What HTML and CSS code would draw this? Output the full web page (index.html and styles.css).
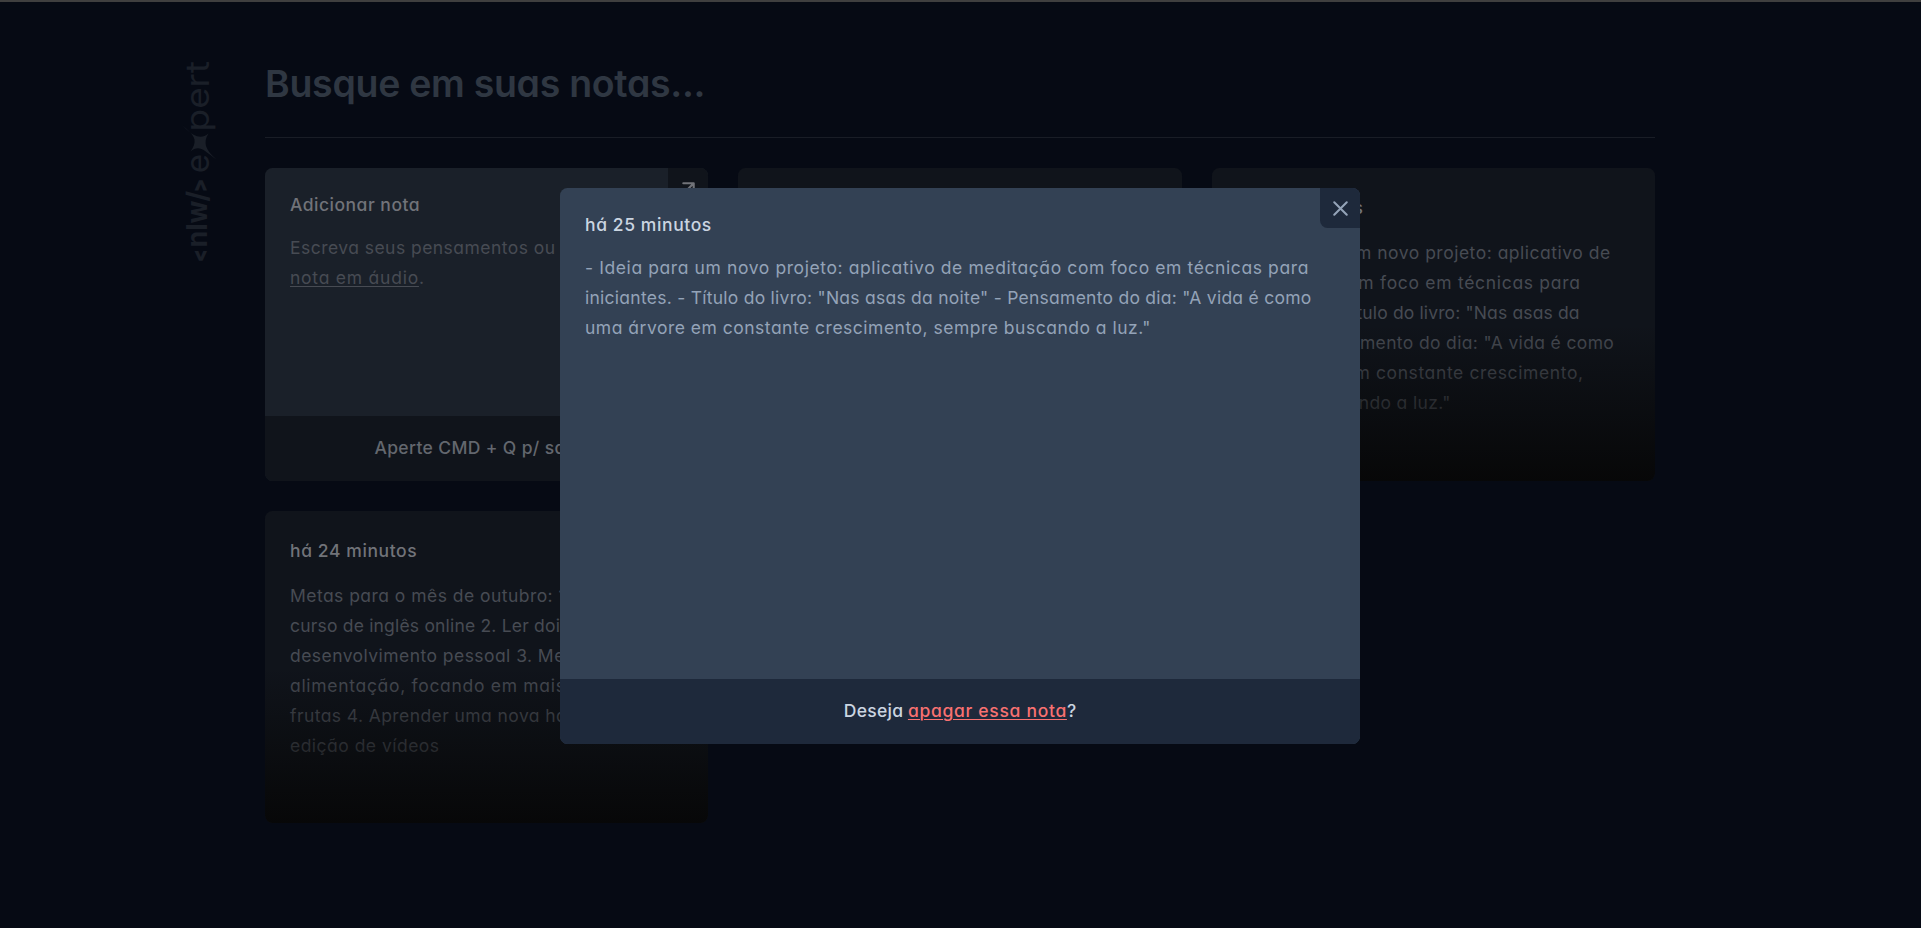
FILE: index.html
```html
<!DOCTYPE html>
<html lang="pt-BR">
<head>
<meta charset="utf-8">
<title>nlw expert notes</title>
<link rel="stylesheet" href="styles.css">
</head>
<body>
<div class="page">
  <aside class="brand">
    <svg class="logo" viewBox="175 61 48 202" width="48" height="202" role="img" aria-label="nlw expert">
      <g class="logo-ink">
        <g class="logo-nlw">
          <text class="logo-tag" transform="translate(206.7 262.2) rotate(-90)" textLength="13" lengthAdjust="spacingAndGlyphs">&lt;</text>
          <text transform="translate(206.7 247.6) rotate(-90)" textLength="47" lengthAdjust="spacingAndGlyphs">nlw</text>
          <text transform="translate(206.7 201.8) rotate(-90)" textLength="11" lengthAdjust="spacingAndGlyphs">/</text>
          <text class="logo-tag" transform="translate(206.7 192.2) rotate(-90)" textLength="13.5" lengthAdjust="spacingAndGlyphs">&gt;</text>
        </g>
        <g class="logo-expert">
          <text transform="translate(209 173.2) rotate(-90)" textLength="19.5" lengthAdjust="spacingAndGlyphs">e</text>
          <text transform="translate(209 131.4) rotate(-90)" textLength="70.5" lengthAdjust="spacingAndGlyphs">pert</text>
        </g>
        <path d="M181.500 124.500C188 131 192.500 135 197 136.200C201.500 137.300 204.500 136.500 208.500 133.500C205.500 138 205 142 206 146C207.500 151 211.500 155 216.500 159.500C209.500 154.500 206 151 201.500 149C198 147.500 194.500 148 190.500 151.500C193.800 147 195 143.500 194.500 139.500C193.500 135 188.500 130.500 181.500 124.500Z"/>
      </g>
    </svg>
  </aside>
  <main class="content">
    <div class="search">Busque em suas notas...</div>
    <div class="rule"></div>
    <section class="grid">
      <article class="card card-new">
        <div class="card-main">
          <h2 class="card-title ls-50">Adicionar nota</h2>
          <p class="copy"><span class="line ls-46">Escreva seus pensamentos ou grave uma</span><span class="line"><u class="ls-76">nota em áudio</u>.</span></p>
        </div>
        <div class="corner"><svg width="25" height="25" viewBox="0 0 24 24"><path d="M7 7h10v10M7 17 17 7"/></svg></div>
        <footer class="card-foot ls-36">Aperte CMD + Q p/ salvar</footer>
      </article>
      <article class="card card-note"></article>
      <article class="card card-note">
        <h2 class="card-title ls-60">há 25 minutos</h2>
        <p class="copy"><span class="line ls-51">- Ideia para um novo projeto: aplicativo de</span><span class="line ls-70">meditação com foco em técnicas para</span><span class="line ls-14">iniciantes. - Título do livro: "Nas asas da</span><span class="line ls-36">noite" - Pensamento do dia: "A vida é como</span><span class="line ls-61">uma árvore em constante crescimento,</span><span class="line ls-35">sempre buscando a luz."</span></p>
      </article>
      <article class="card card-note">
        <h2 class="card-title ls-60">há 24 minutos</h2>
        <p class="copy"><span class="line ls-46">Metas para o mês de outubro: 1. Fazer</span><span class="line ls-19">curso de inglês online 2. Ler dois livros de</span><span class="line ls-45">desenvolvimento pessoal 3. Melhorar a</span><span class="line ls-70">alimentação, focando em mais</span><span class="line ls-42">frutas 4. Aprender uma nova habilidade:</span><span class="line ls-48">edição de vídeos</span></p>
      </article>
    </section>
  </main>
</div>
<div class="overlay">
  <div class="modal" role="dialog">
    <div class="modal-main">
      <h2 class="card-title ls-60">há 25 minutos</h2>
      <p class="copy"><span class="line ls-60">- Ideia para um novo projeto: aplicativo de meditação com foco em técnicas para</span><span class="line ls-26">iniciantes. - Título do livro: "Nas asas da noite" - Pensamento do dia: "A vida é como</span><span class="line ls-50">uma árvore em constante crescimento, sempre buscando a luz."</span></p>
    </div>
    <button class="close" aria-label="Fechar"><svg width="25" height="25" viewBox="0 0 24 24"><path d="M18 6 6 18M6 6l12 12"/></svg></button>
    <footer class="modal-foot"><span class="ls-26">Deseja</span> <u class="danger ls-70">apagar essa nota</u>?</footer>
  </div>
</div>
</body>
</html>
```
FILE: styles.css
```css
* { box-sizing: border-box; margin: 0; }
html, body { height: 928px; overflow: hidden; }
body {
  background: #060a14;
  border-top: 2px solid #3f3f3f;
  font: 400 17.5px/30px Inter, "Open Sans", sans-serif;
  font-feature-settings: "cv11";
}
.page { display: flex; width: 1480px; margin-left: 175px; padding-top: 59px; }
.brand { width: 90px; flex: none; }
.logo { display: block; overflow: visible; }
.logo-ink { fill: #1a1f28; }
.logo-nlw { font-size: 28px; font-weight: 700; }
.logo-tag { font-size: 21px; font-weight: 900; }
.logo-expert { font-size: 33px; font-weight: 400; }
.content { width: 1390px; }
.search {
  height: 76px;
  color: #2f3742;
  font-size: 37.5px;
  font-weight: 600;
  line-height: 45px;
  letter-spacing: -0.3px;
}
.rule { height: 1px; background: #191d26; margin-bottom: 30px; }
.grid {
  display: grid;
  grid-template-columns: repeat(3, 1fr);
  grid-auto-rows: 312.5px;
  gap: 30px;
}
.card {
  position: relative;
  overflow: hidden;
  border-radius: 7.5px;
  background: #10141b;
  color: #474b53;
}
.card-new { display: flex; flex-direction: column; background: #1a2029; }
.card-main { flex: 1; padding: 25px; }
.card-title { font-size: 17.5px; font-weight: 460; line-height: 23px; margin-bottom: 17px; }
.card .card-title { color: #717379; }
.card-note { padding: 25px; }
.card-note .card-title { line-height: 30px; margin-bottom: 15px; }
.card-note::after {
  content: "";
  position: absolute;
  inset: 50% 0 0;
  background: linear-gradient(to top, rgba(6, 6, 6, 0.9), rgba(5, 6, 8, 0));
}
.copy { display: flex; flex-direction: column; }
.line { white-space: nowrap; }
u { text-underline-offset: 2px; text-decoration-thickness: 1px; }
.corner {
  position: absolute;
  top: 0;
  right: 0;
  display: grid;
  place-items: center;
  width: 40px;
  height: 40px;
  background: #10141b;
  border-bottom-left-radius: 7.5px;
}
svg path { stroke-linecap: round; stroke-linejoin: round; }
.corner path { fill: none; stroke: #717379; stroke-width: 2; }
.card-foot {
  height: 65px;
  padding-top: 20px;
  background: #10141b;
  color: #63676e;
  font-weight: 460;
  line-height: 23px;
  text-align: center;
}
.overlay {
  position: absolute;
  inset: 2px 0 0;
  display: flex;
  justify-content: center;
  align-items: flex-start;
  padding: 186px 1px 0 0;
}
.modal {
  position: relative;
  display: flex;
  flex-direction: column;
  width: 800px;
  height: 555.6px;
  overflow: hidden;
  border-radius: 7.5px;
  background: #334154;
}
.modal-main { flex: 1; padding: 25px; color: #94a3b8; }
.modal .card-title { color: #cbd5e1; }
.close {
  position: absolute;
  top: 0;
  right: 0;
  display: grid;
  place-items: center;
  width: 40px;
  height: 40px;
  padding: 0;
  border: 0;
  border-bottom-left-radius: 7.5px;
  background: #1e293b;
}
.close path { fill: none; stroke: #94a3b8; stroke-width: 2; }
.modal-foot {
  height: 65px;
  padding-top: 20px;
  background: #1e293b;
  color: #cbd5e1;
  font-weight: 460;
  line-height: 23px;
  text-align: center;
}
.danger { color: #f87171; }

/* tracking, tuned per line */
.ls-14 { letter-spacing: 0.14px; }
.ls-19 { letter-spacing: 0.19px; }
.ls-26 { letter-spacing: 0.258px; }
.ls-35 { letter-spacing: 0.346px; }
.ls-36 { letter-spacing: 0.36px; }
.ls-42 { letter-spacing: 0.42px; }
.ls-45 { letter-spacing: 0.447px; }
.ls-46 { letter-spacing: 0.46px; }
.ls-48 { letter-spacing: 0.478px; }
.ls-50 { letter-spacing: 0.5px; }
.ls-51 { letter-spacing: 0.507px; }
.ls-60 { letter-spacing: 0.598px; }
.ls-61 { letter-spacing: 0.61px; }
.ls-70 { letter-spacing: 0.695px; }
.ls-76 { letter-spacing: 0.765px; }
```
